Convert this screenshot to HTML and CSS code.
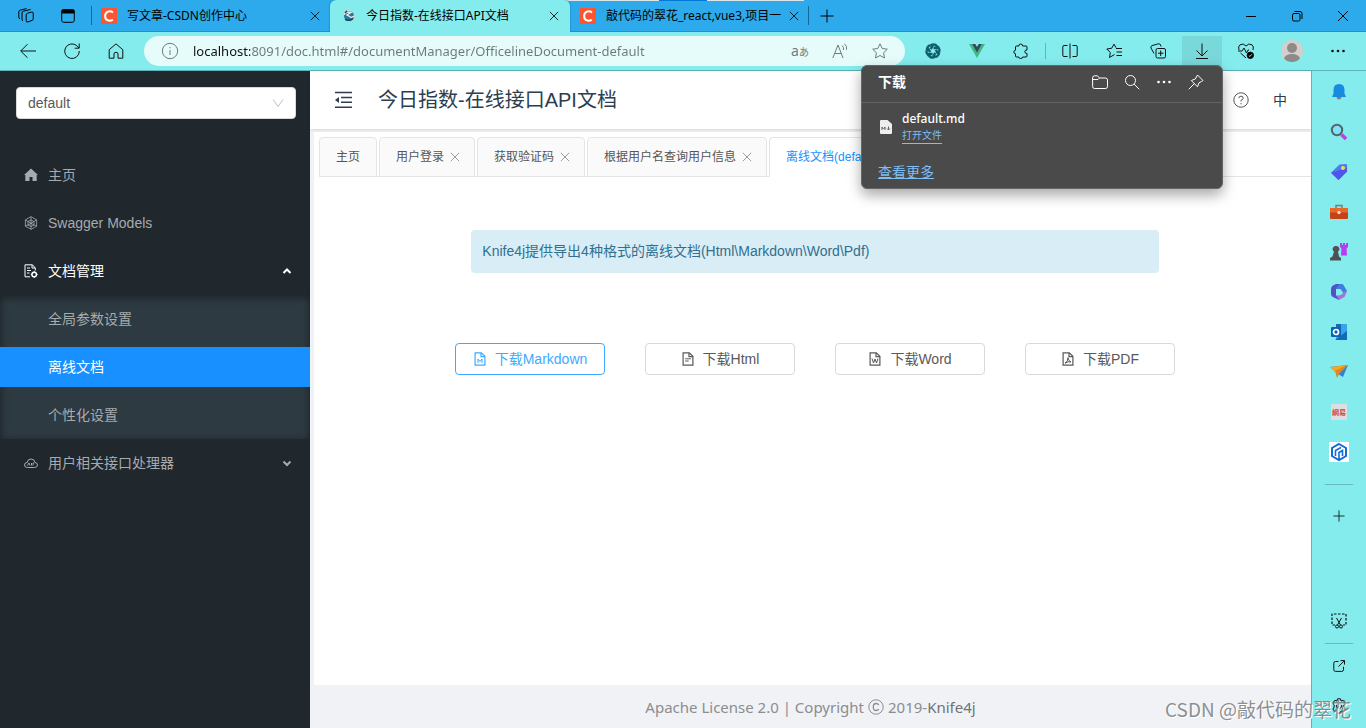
FILE: index.html
```
<!DOCTYPE html>
<html lang="zh-CN">
<head>
<meta charset="utf-8">
<title>今日指数-在线接口API文档</title>
<link rel="stylesheet" href="styles.css">
</head>
<body>
<svg class="defs" aria-hidden="true">
  <symbol id="close" viewBox="0 0 12 12"><path d="M1 1l10 10M11 1l-10 10"/></symbol>
  <symbol id="plus" viewBox="0 0 14 14"><path d="M7 .5v13M.5 7h13"/></symbol>
  <symbol id="dots" viewBox="0 0 16 16"><g fill="currentColor" stroke="none"><circle cx="2.500" cy="8" r="1.300"/><circle cx="8" cy="8" r="1.300"/><circle cx="13.500" cy="8" r="1.300"/></g></symbol>
  <symbol id="csdn" viewBox="0 0 16 16"><path fill="#fc5531" stroke="none" d="M0 0h16v16H0z"/><path stroke="#fff" stroke-width="2" d="M12 4.500C10.500 3.300 8.500 3 7 3.600 3.300 5 3.200 10.500 6.400 12.200c1.700.9 3.900.6 5.400-.6"/></symbol>
  <symbol id="sheet" viewBox="0 0 14 14"><path stroke-width="1.200" d="M2.100.8h6.200l3.600 3.500v8.900H2.100zM8 1v3.600h3.700"/></symbol>
</svg>

<header class="tabstrip">
  <span class="topline"></span>
  <button class="strip-btn" aria-label="工作区"><svg class="i16" viewBox="0 0 16 16"><path d="M9.500 5.200l4-1.100q1.700-.4 1.700 1.200v5.500q0 1.200-1.200 1.600l-4 1.500q-1.800.5-1.800-1.200V7q0-1.400 1.300-1.800zM5 13Q4 12.500 4 11V5q0-1.400 1.300-1.800L12.500 1.500M2 11Q.8 10.500.8 9V4q0-1.400 1.300-1.800L8.500.6"/></svg></button>
  <button class="strip-btn" aria-label="标签页操作"><svg class="i14" viewBox="0 0 14 14"><rect x=".7" y=".7" width="12.600" height="12.600" rx="2"/><path fill="#000" d="M1 1h12v3H1z"/><path d="M3.500 4v-2"/></svg></button>
  <div class="btab first"><svg class="i16"><use href="#csdn"/></svg><button class="btab-name">写文章-CSDN创作中心</button><button class="x" aria-label="关闭"><svg><use href="#close"/></svg></button></div>
  <div class="btab current"><svg class="i14" viewBox="0 0 14 14"><circle cx="7" cy="7" r="5.500" fill="#1d7ba4" stroke="#c5dedb"/><path d="M2 5.500Q5 2 9 3.500L5 6l4.500 2.500L12 7" stroke="#f5ebe4" stroke-width="1.400"/><path d="M3 10.500q5 2 8-1M3 4l2-2" stroke="#103a50" stroke-width="1.300"/></svg><button class="btab-name">今日指数-在线接口API文档</button><button class="x" aria-label="关闭"><svg><use href="#close"/></svg></button></div>
  <div class="btab last"><svg class="i16"><use href="#csdn"/></svg><button class="btab-name">敲代码的翠花_react,vue3,项目一</button><button class="x" aria-label="关闭"><svg><use href="#close"/></svg></button></div>
  <button class="newtab" aria-label="新建标签页"><svg class="i14"><use href="#plus"/></svg></button>
  <div class="winbtns">
    <button aria-label="最小化"><svg class="i12" viewBox="0 0 12 12"><path d="M1 6.500h10"/></svg></button>
    <button aria-label="还原"><svg class="i12" viewBox="0 0 12 12"><rect x="1.500" y="3.500" width="7.500" height="7.500" rx="1.500"/><path d="M3.500 1.500H9q2 0 2 2v5.500"/></svg></button>
    <button aria-label="关闭窗口"><svg class="i12"><use href="#close"/></svg></button>
  </div>
</header>

<nav class="toolbar">
  <button aria-label="返回"><svg class="i16" viewBox="0 0 16 16"><path d="M16 8H.8M7.500 1.200L.7 8l6.800 6.800"/></svg></button>
  <button aria-label="刷新"><svg class="i16" viewBox="0 0 16 16"><path d="M15.300 8A7.300 7.300 0 1 1 12.800 2.700L15 5M15.200.5V5.200h-4.500"/></svg></button>
  <button aria-label="主页"><svg class="i16" viewBox="0 0 16 16"><path d="M1.200 6.700L8 .9l6.800 5.800v8.500H10V11q0-1.700-2-1.700T6 11v4.200H1.200z"/></svg></button>
  <div class="address">
    <svg class="i18" viewBox="0 0 18 18"><circle cx="9" cy="9" r="7.700"/><path d="M9 8v5M9 5v1.300"/></svg>
    <input aria-label="地址" value="localhost:8091/doc.html#/documentManager/OfficelineDocument-default">
    <button aria-label="翻译"><span class="tr">a<small>あ</small></span></button>
    <button aria-label="朗读"><svg class="i16" viewBox="0 0 16 16"><path d="M.8 15L6 2l5 13M2.500 10.500h7M10 2.500q2 1.500 1.500 4.500M12.500.8q3 2.500 2 6"/></svg></button>
    <button aria-label="收藏"><svg class="i16" viewBox="0 0 16 16"><path d="M8 .8l2.200 4.700 5.100.7-3.700 3.600.9 5.200L8 12.500 3.500 15l.9-5.200L.7 6.200l5.100-.7z"/></svg></button>
  </div>
  <button aria-label="ChatGPT"><svg class="i16" viewBox="0 0 16 16"><g stroke="#0f5e6e" stroke-width="2.400"><path id="petal" d="M6 2c3.500-1.500 6.200 0 6 3L8.500 5"/><use href="#petal" transform="rotate(60 8 8)"/><use href="#petal" transform="rotate(120 8 8)"/><use href="#petal" transform="rotate(180 8 8)"/><use href="#petal" transform="rotate(240 8 8)"/><use href="#petal" transform="rotate(300 8 8)"/></g></svg></button>
  <button aria-label="Vue"><svg class="i16" viewBox="0 0 16 16"><path fill="#41b883" stroke="none" d="M0 1h16L8 15z"/><path fill="#34495e" stroke="none" d="M3.200 1h9.600L8 9.500z"/><path fill="#85ecee" stroke="none" d="M6.300 1h3.400L8 4z"/></svg></button>
  <button aria-label="扩展"><svg class="i16" viewBox="0 0 16 16"><path d="M5.800 3Q5.700 1 7.700 1T9.700 3H13q1 0 1 1v3q-2-.3-2.200 1.500T14 10.500V13q0 1-1 1H9.700q0 1.500-2 1.500T5.800 14H3.500q-1 0-1-1v-2.300Q.8 10.500.8 9t1.700-1.800V4q0-1 1-1z"/></svg></button>
  <span class="vsep"></span>
  <button aria-label="分屏"><svg class="i16" viewBox="0 0 16 16"><path d="M5.500 2.500H2Q.8 2.500.8 3.700v8.600q0 1.200 1.200 1.200h3.500M10.500 2.500H14q1.200 0 1.200 1.200v8.600q0 1.200-1.200 1.200h-3.500M8 .5v15"/></svg></button>
  <button aria-label="收藏夹"><svg class="i16" viewBox="0 0 16 16"><path d="M8.500 11.500L3.500 14.500 4.300 9.500.8 6l4.800-.7L8 1.200l2 3.500M10 5.500h6M10.500 9H16M10.500 12.500H16"/></svg></button>
  <button aria-label="集锦"><svg class="i16" viewBox="0 0 16 16"><rect x="6" y="5.500" width="9.500" height="9.500" rx="1.500"/><path d="M10.700 7.500v5.500M8 10.200h5.500M4 10.500L1 5Q.3 3.300 2 2.600L8.500.8Q10 .5 10.500 2l.5 1.500"/></svg></button>
  <button class="pressed" aria-label="下载"><svg class="i16" viewBox="0 0 16 16"><path d="M8 .5v12M2.500 7.500L8 13l5.500-5.500M2 15.500h12"/></svg></button>
  <button aria-label="浏览器概要"><svg class="i16" viewBox="0 0 16 16"><path d="M1 7Q-.2 3.500 2 1.800 5.500-.3 8 3q2.500-3.300 6-1.200Q16.200 3.500 15 7M0 8h4l2-3 2.500 5 1.500-3h1M2.500 10l5.500 5"/><circle cx="12.300" cy="12.300" r="3.200" fill="#000"/><path stroke="#85ecee" d="M10.800 12.500l1.100 1 2-2.200"/></svg></button>
  <button class="me" aria-label="个人资料"><svg class="i22" viewBox="0 0 22 22"><clipPath id="av"><circle cx="11" cy="11" r="11"/></clipPath><g clip-path="url(#av)" stroke="none"><path fill="#d2cfcc" d="M0 0h22v22H0z"/><circle cx="11" cy="8" r="5" fill="#8d8a88"/><ellipse cx="11" cy="19" rx="8" ry="5" fill="#8d8a88"/></g></svg></button>
  <button class="more" aria-label="更多"><svg class="i16"><use href="#dots"/></svg></button>
</nav>

<div class="workspace">
  <aside class="sider">
    <div class="select"><select aria-label="分组"><option>default</option></select><svg class="i12" viewBox="0 0 12 12"><path d="M1 2.500l5 7 5-7"/></svg></div>
    <ul class="menu">
      <li><a href="#home"><svg class="i14" viewBox="0 0 14 14"><path fill="currentColor" stroke="none" d="M7 .5L14 7h-1.300v6H8.500V9h-3v4H1.300V7H0z"/></svg>主页</a></li>
      <li><a href="#models"><svg class="i14" viewBox="0 0 14 14"><path stroke-width=".8" d="M7 .7l5.600 3.100v6.400L7 13.300l-5.600-3.100V3.800zM7 .7v3.500M1.400 3.800L4 5.500M12.600 3.800L10 5.500M1.400 10.200L4 9M12.600 10.200L10 9M7 13.300V10M4 5.500l3-1.500 3 1.500V9l-3 1.500L4 9zM4 5.500L10 9M7 4v6M10 5.500L4 9"/></svg>Swagger Models</a></li>
      <li class="open"><a href="#docs"><svg class="i14" viewBox="0 0 14 14"><path d="M6 12.800H1V.8h7.500L11.300 4v2.500M8 1v3h3M3 4h3M3 6.500h4M3 9h2.500"/><circle cx="10.200" cy="10.500" r="2.300" stroke-width="1.500"/><path d="M10.200 7v1M10.200 13v1M6.800 10.500h1M12.600 10.500h1"/></svg>文档管理<svg class="arrow" viewBox="0 0 10 10"><path d="M1.500 7L5 3.500 8.500 7"/></svg></a>
        <ul class="sub">
          <li><a href="#global">全局参数设置</a></li>
          <li><a class="active" href="#offline">离线文档</a></li>
          <li><a href="#settings">个性化设置</a></li>
        </ul>
      </li>
      <li><a href="#user"><svg class="i14" viewBox="0 0 14 14"><path d="M3.500 11.500Q.5 11.500.5 9T3.200 6.500Q3.500 3 7 3t4 3.500q2.500.2 2.500 2.500t-3 2.500zM3.500 9.500L5 7l1 2.500M7.500 9.500V7M9 9.500V7h1.200"/></svg>用户相关接口处理器<svg class="arrow" viewBox="0 0 10 10"><path d="M1.500 3.500L5 7l3.500-3.500"/></svg></a></li>
    </ul>
  </aside>

  <main class="page">
    <header class="page-head">
      <button aria-label="收起菜单"><svg class="i20" viewBox="0 0 20 20"><path stroke-width="1.600" d="M1 2.500h17M7 7.500h11M7 12.300h11M1 17.200h17"/><path fill="currentColor" stroke="none" d="M1 10l4-3v6z"/></svg></button>
      <h1>今日指数-在线接口API文档</h1>
      <button class="help" aria-label="帮助"><svg class="i16" viewBox="0 0 16 16"><circle cx="8" cy="8" r="7.200"/><path d="M5.800 6.200Q5.800 4.200 8 4.200t2.200 2Q10.200 7.500 8 8.300v1.200M8 11v1.300"/></svg></button>
      <button class="lang">中</button>
    </header>
    <div class="panel">
      <div class="ptabs">
        <div class="ptab"><button>主页</button></div>
        <div class="ptab"><button>用户登录</button><button class="px" aria-label="关闭"><svg><use href="#close"/></svg></button></div>
        <div class="ptab"><button>获取验证码</button><button class="px" aria-label="关闭"><svg><use href="#close"/></svg></button></div>
        <div class="ptab"><button>根据用户名查询用户信息</button><button class="px" aria-label="关闭"><svg><use href="#close"/></svg></button></div>
        <div class="ptab on"><button>离线文档(default)</button><button class="px" aria-label="关闭"><svg><use href="#close"/></svg></button></div>
      </div>
      <div class="offline">
        <p class="alert">Knife4j提供导出4种格式的离线文档(Html\Markdown\Word\Pdf)</p>
        <div class="downloads">
          <button class="dl focus"><svg class="i14" viewBox="0 0 14 14"><use href="#sheet"/><path d="M5 11V7l2 2.500L9 7v4"/></svg>下载Markdown</button>
          <button class="dl"><svg class="i14" viewBox="0 0 14 14"><use href="#sheet"/><path d="M4.200 6.800h5.600M4.200 9h3.500"/></svg>下载Html</button>
          <button class="dl"><svg class="i14" viewBox="0 0 14 14"><use href="#sheet"/><path d="M4 6.500L5.500 11 7 7l1.500 4L10 6.500"/></svg>下载Word</button>
          <button class="dl"><svg class="i14" viewBox="0 0 14 14"><use href="#sheet"/><path d="M4 11.200Q7 9.500 7 5.700 7.300 9 10 10 7 9 4 11.200"/></svg>下载PDF</button>
        </div>
      </div>
    </div>
    <footer class="page-foot">Apache License 2.0 | Copyright <svg class="i16" viewBox="0 0 16 16"><circle cx="8" cy="8" r="7.200"/><path stroke-width="1.300" d="M10.800 6Q10 4.500 8 4.500 5.300 4.500 5.300 8T8 11.500q2 0 2.800-1.500"/></svg> 2019-<a href="#knife4j">Knife4j</a></footer>
  </main>

  <aside class="rail">
    <button aria-label="通知"><svg viewBox="0 0 18 18"><path fill="#8b7b78" d="M6.500 14h5q-.5 2.500-2.500 2.500T6.500 14z"/><path fill="#168be0" d="M9 1q5.500 0 5.500 6v3.500l1.500 3.500H2l1.500-3.500V7Q3.500 1 9 1z"/></svg></button>
    <button aria-label="搜索"><svg viewBox="0 0 18 18"><path stroke="#c43be8" stroke-width="3.500" d="M11.500 11.500l4.500 4.500"/><circle cx="7" cy="7" r="5.200" stroke="#596366" stroke-width="2" fill="#7be4fb"/></svg></button>
    <button aria-label="购物"><svg viewBox="0 0 18 18"><path fill="#4a7cf2" d="M9.500 1.500L16 1q1 0 1 1v6.500L8.500 17 1 9.700z"/><path fill="#4f55ea" d="M1 9.700L8.500 17l8.500-8.500V5z"/><circle cx="13" cy="5" r="2" fill="#ffd54a"/></svg></button>
    <button aria-label="工具"><svg viewBox="0 0 18 18"><path stroke="#757d83" stroke-width="1.500" d="M6 5V2.500h6V5"/><rect y="5" width="18" height="11" rx="1" fill="#c64319"/><path fill="#e76827" d="M0 5h18v4.500H0z"/><circle cx="9" cy="9.500" r="1.700" fill="#ecd8cc"/></svg></button>
    <button aria-label="游戏"><svg viewBox="0 0 18 18"><path fill="#b83bf2" d="M10 0h2v2h1V0h2v2h1V0h2v4l-1.500 1.500.5 7h-6l.5-7L10 4z"/><path fill="#4e5054" d="M6 3a3 3 0 0 1 2 5.500l1 5 2 1.500v2.500H0V15l2.500-1.500L4 8.500A3 3 0 0 1 6 3z"/></svg></button>
    <button aria-label="Microsoft 365"><svg viewBox="0 0 18 18"><path fill="#3f7de0" d="M6 1h6q1 0 1.500 1L17 8l-3 3-3.500-5H6z"/><path fill="#a474d5" d="M17 8l-2 5q-.5 1-1.500 1.500L9 17l-5-4 7-1 3-3z"/><path fill="#4f55c6" d="M6 1Q1 2.500 1 6v5q0 2.500 4 4l4 2-3-5V6l3-5z"/></svg></button>
    <button aria-label="Outlook"><svg viewBox="0 0 18 18"><path fill="#35a5e6" d="M6 1h11v16H6z"/><path fill="#1768b5" d="M6 1h5v5H6zM17 8v9H5z"/><rect x="1" y="4" width="10" height="10" rx="1" fill="#0864b8"/><circle cx="6" cy="9" r="2.500" stroke="#fff" stroke-width="1.700"/></svg></button>
    <button aria-label="Drop"><svg viewBox="0 0 18 18"><path fill="#2c83dd" d="M0 4l18-2-5 12-5-3z"/><path fill="#f2a722" d="M0 4l18-2L5 9z"/><path fill="#dc8624" d="M5 8l2 7 2-4 9-9z"/></svg></button>
    <button class="netease">網易</button>
    <button class="hex" aria-label="应用"><svg viewBox="0 0 20 20"><path fill="#fff" d="M1 0h18q1 0 1 1v18q0 1-1 1H1q-1 0-1-1V1q0-1 1-1z"/><path stroke="#126bd9" stroke-width="2" d="M10 2l7 4v8l-7 4-7-4V6z"/><path stroke="#126bd9" stroke-width="1.600" d="M6.500 14V8.500L12 5.500M10 17v-6.500l3.500-2V14"/></svg></button>
    <hr>
    <button class="line" aria-label="添加"><svg class="i14"><use href="#plus"/></svg></button>
    <button class="line push" aria-label="截图"><svg class="i16" viewBox="0 0 16 16"><path stroke-width="1.200" stroke-dasharray="2.500 1.500" d="M4 12H1V1h14v11h-3"/><path d="M5.500 5l4 7M10.500 5l-4 7"/><circle cx="6" cy="13.500" r="1.500"/><circle cx="10" cy="13.500" r="1.500"/></svg></button>
    <hr class="tight">
    <button class="line" aria-label="在新窗口打开"><svg class="i12" viewBox="0 0 12 12"><path d="M5.500 1.500h-3q-1.700 0-1.700 1.700v6.500q0 1.700 1.700 1.700H8.800q1.700 0 1.700-1.700v-3M7.500.6h4v4M11.500.6l-6 6"/></svg></button>
    <button class="line" aria-label="设置"><svg class="i16" viewBox="0 0 16 16"><circle cx="8" cy="8" r="2.500"/><path d="M6.500.8h3l.5 2.200 2.200-.7 1.900 2.600L12.800 7v2l1.300 2-1.900 2.700-2.200-.7-.5 2.200h-3L6 13l-2.200.7L1.900 11l1.300-2V7L1.900 5l1.900-2.700L6 3z"/></svg></button>
  </aside>
</div>

<section class="popup" aria-label="下载">
  <header><h2>下载</h2>
    <button aria-label="打开文件夹"><svg class="i16" viewBox="0 0 16 16"><path d="M.6 4Q.6 1.800 2.500 1.800h3L7.500 4H13.500q2 0 2 2v6.500q0 2-2 2h-11q-1.900 0-1.900-2zM.6 5.500H6L7.500 4"/></svg></button>
    <button aria-label="搜索"><svg class="i16" viewBox="0 0 16 16"><circle cx="6.500" cy="6.500" r="5"/><path d="M10.200 10.200l5 5"/></svg></button>
    <button aria-label="更多"><svg class="i16"><use href="#dots"/></svg></button>
    <button aria-label="固定"><svg class="i16" viewBox="0 0 16 16"><path d="M9.500 1l5.500 5.500-1.500 1L11 8.800l-1.500 4L3.300 6.500l4-1.500zM6.300 9.700L.8 15.200"/></svg></button>
  </header>
  <div class="file"><svg viewBox="0 0 12 14"><path fill="#eee" stroke="none" d="M1 0h6.500L12 4v9q0 1-1 1H1q-1 0-1-1V1q0-1 1-1z"/><path stroke="#666" d="M2 10V7l1.500 2L5 7v3M8.500 6.500V10M7 8.500L8.500 10 10 8.500"/></svg><div><strong>default.md</strong><a href="#open">打开文件</a></div></div>
  <a class="all" href="#all">查看更多</a>
</section>
<div class="watermark">CSDN @敲代码的翠花</div>
</body>
</html>
```

FILE: styles.css
```
* { box-sizing: border-box; }
body { margin: 0; height: 100vh; display: flex; flex-direction: column; overflow: hidden; background: #fff; font: 14px/20px "Liberation Sans", "Noto Sans CJK SC", sans-serif; }
button { border: 0; padding: 0; background: none; font: inherit; color: inherit; display: flex; align-items: center; justify-content: center; white-space: nowrap; }
a { color: inherit; text-decoration: none; }
ul { list-style: none; margin: 0; padding: 0; }
svg { fill: none; stroke: currentColor; flex: none; }
.defs { display: none; }
.i12 { width: 12px; height: 12px; }
.i14 { width: 14px; height: 14px; }
.i16 { width: 16px; height: 16px; }
.i18 { width: 18px; height: 18px; }
.i20 { width: 20px; height: 20px; }
.i22 { width: 22px; height: 22px; }

.tabstrip, .toolbar, .popup { font-family: "Noto Sans", "Noto Sans CJK SC", sans-serif; }
.tabstrip { position: relative; flex: none; height: 32px; display: flex; background: #2caaec; color: #000; font-size: 12px; line-height: 16px; padding-left: 5px; box-shadow: inset 0 -1px #2191cc; }
.topline { position: absolute; top: 0; left: 563px; width: 241px; height: 1px; background: linear-gradient(90deg, #dce4e8 96px, #0078d7 96px 144px, #dce4e8 144px); }
.strip-btn { width: 42px; }
.btab { width: 239px; display: flex; align-items: center; padding: 0 8px 0 10px; }
.btab .x { width: 14px; height: 16px; margin-left: auto; }
.btab .x svg { width: 10px; height: 10px; }
.btab-name { margin-left: 10px; overflow: hidden; }
.btab.first { margin-left: 2px; background: linear-gradient(#15669a, #15669a) 0 6px / 1px 19px no-repeat; }
.btab.current { width: 240px; background: #85ecee; border-radius: 6px 6px 0 0; padding: 0 9px 0 12px; box-shadow: 0 0 2px #176fa5; clip-path: inset(0 -3px 0 -3px); }
.btab.last { background: linear-gradient(#15669a, #15669a) 100% 6px / 1px 19px no-repeat; }
.newtab { width: 36px; }
.winbtns { margin-left: auto; display: flex; }
.winbtns button { width: 46px; }

.toolbar { flex: none; height: 39px; display: flex; align-items: center; gap: 4px; padding: 0 8px; background: #85ecee; border-bottom: 1px solid #5fb2b5; color: #111; }
.toolbar > button { width: 40px; height: 30px; }
.address { flex: 1; min-width: 0; height: 30px; margin: 0 4px; padding: 0 5px 0 17px; display: flex; align-items: center; border-radius: 15px; background: #e6fcfb; color: #707b7b; }
.address input { flex: 1; min-width: 0; height: 30px; margin-left: 14px; border: 0; padding: 0; outline: 0; font: 13px "Noto Sans", sans-serif; color: transparent; background: linear-gradient(90deg, #111 57px, #6e7878 57px); background-clip: text; -webkit-background-clip: text; }
.address button { width: 40px; height: 30px; }
.tr { font-size: 14px; }
.tr small { font-size: 10px; }
.vsep { width: 1px; height: 16px; background: #62b6b9; }
.toolbar .pressed { background: #79d8da; }
.toolbar .me, .toolbar .more { margin-left: 2px; }

.workspace { flex: 1; min-height: 0; display: flex; }
.sider { width: 310px; flex: none; background: #20272d; color: #a7abad; padding-top: 16px; }
.select { margin: 0 14px 32px 16px; height: 32px; position: relative; }
.select select { appearance: none; width: 100%; height: 32px; border: 1px solid #d9d9d9; border-radius: 4px; background: #fff; padding: 0 11px; font: inherit; color: #595959; }
.select svg { position: absolute; right: 12px; top: 10px; color: #bfbfbf; }
.menu a { height: 40px; margin: 4px 0; padding: 0 18px 0 24px; display: flex; align-items: center; gap: 10px; }
.menu li { display: flow-root; }
.menu .open > a { color: #fff; }
.arrow { width: 10px; height: 10px; margin-left: auto; stroke-width: 2; }
.sub { display: flow-root; background: #2d3a41; box-shadow: inset 0 2px 8px rgba(0, 0, 0, .45); }
.menu .sub a { padding-left: 48px; }
.menu .sub .active { background: #1890ff; color: #fff; }

.page { flex: 1; min-width: 0; display: flex; flex-direction: column; background: #f0f2f5; }
.page-head { height: 58px; flex: none; display: flex; align-items: center; background: #fff; color: #2c3e50; padding: 0 24px; box-shadow: 0 1px 3px rgba(0, 21, 41, .12); }
.page-head h1 { margin: 0 auto 0 24px; font-size: 20px; line-height: 28px; font-weight: 400; }
.help { color: #555; width: 20px; margin-right: 22px; }
.lang { width: 14px; }
.panel { flex: 1; min-height: 0; margin: 3px 0 0 4px; background: #fff; padding: 5px 0 0 5px; }
.ptabs { display: flex; gap: 2px; border-bottom: 1px solid #e4e4e4; font-size: 12px; color: #555; }
.ptab { height: 40px; margin-bottom: -1px; border: 1px solid #e4e4e4; border-radius: 4px 4px 0 0; background: #fafafa; display: flex; align-items: center; gap: 5px; padding: 0 13px 0 16px; }
.ptab:first-child { padding-right: 16px; }
.ptab .px { width: 12px; color: #888; }
.px svg { width: 10px; height: 10px; }
.ptab.on { background: #fff; border-bottom-color: #fff; color: #1890ff; }
.offline { padding: 53px 5px 0; display: flex; flex-direction: column; align-items: center; }
.alert { width: 70%; margin: 0 0 70px; padding: 11px; line-height: 21px; border-radius: 4px; background: #d9edf7; color: #31708f; }
.downloads { display: flex; gap: 40px; }
.dl { width: 150px; height: 32px; border: 1px solid #d9d9d9; border-radius: 4px; background: #fff; color: #595959; gap: 8px; }
.dl.focus { border-color: #40a9ff; color: #40a9ff; }
.page-foot { height: 43px; flex: none; display: flex; align-items: center; justify-content: center; gap: 4px; color: #8b8d90; font-family: "Noto Sans", sans-serif; font-size: 15px; }
.page-foot a { color: #707275; margin-left: -4px; }

.rail { flex: none; width: 55px; padding: 1px 0 2px; background: #85ecee; border-left: 1px solid #5fb2b5; display: flex; flex-direction: column; align-items: center; }
.rail button { width: 40px; height: 40px; flex: none; }
.rail button svg { width: 18px; height: 18px; stroke: none; }
.rail .hex svg { width: 20px; height: 20px; }
.rail .line svg { width: 16px; height: 16px; stroke: #111; }
.rail .line .i12 { width: 12px; height: 12px; }
.rail .line .i14 { width: 12px; height: 12px; }
.rail .netease { width: 16px; height: 16px; margin: 12px 0; background: #dedede; color: #d04848; font: 700 7px/16px "Noto Sans CJK SC", sans-serif; }
.rail hr { width: 28px; flex: none; height: 1px; border: 0; margin: 12px 0 11px; background: #69babc; }
.rail .push { margin-top: auto; }
.rail .tight { margin: 2px 0; }

.popup { position: absolute; top: 65px; right: 143px; width: 362px; height: 124px; border: 1px solid #666; border-radius: 6px; background: #4a4a4a; color: #fff; box-shadow: 0 6px 14px rgba(0, 0, 0, .35); }
.popup header { height: 37px; display: flex; align-items: center; border-bottom: 1px solid #626262; padding: 0 10px 4px 16px; }
.popup h2 { margin: 0 auto 0 0; font-size: 14px; line-height: 20px; font-weight: 700; }
.popup header button { width: 32px; height: 32px; }
.file { display: flex; align-items: center; gap: 10px; padding: 7px 18px 0; }
.file > svg { width: 12px; height: 14px; }
.file div { display: flex; flex-direction: column; align-items: flex-start; }
.file strong { font-size: 12px; line-height: 18px; font-weight: 500; }
.file a { font-size: 10px; line-height: 15px; color: #7fbdf2; border-bottom: 1px solid; }
.popup .all { display: block; width: fit-content; margin: 18px 16px 0; line-height: 19px; color: #7fbdf2; text-decoration: underline; text-decoration-thickness: 1px; }
.watermark { position: absolute; right: 15px; bottom: 6px; font: 19px/26px "Noto Sans CJK SC", sans-serif; color: rgba(110, 115, 118, .8); text-shadow: 1px 1px #fff; white-space: nowrap; pointer-events: none; }
```
